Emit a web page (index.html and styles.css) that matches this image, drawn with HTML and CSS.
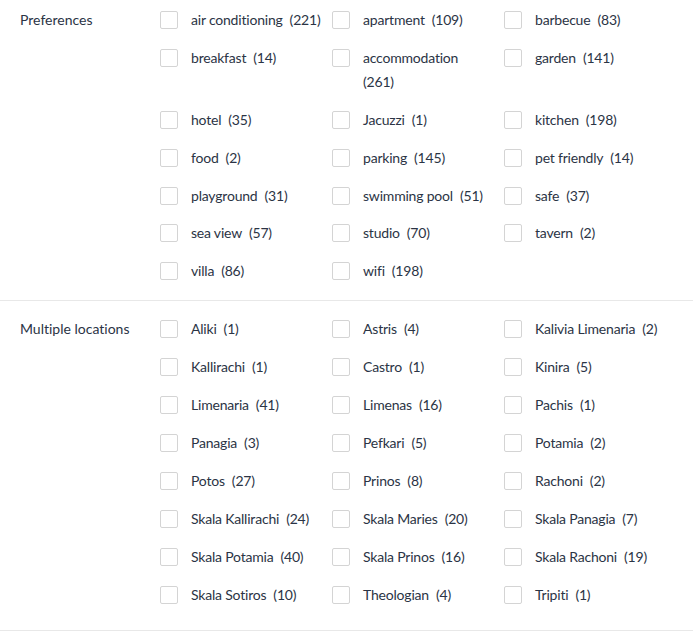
FILE: index.html
```html
<!DOCTYPE html>
<html>
<head>
<meta charset="utf-8">
<link rel="stylesheet" href="styles.css">
</head>
<body>
<section class="group group-first">
  <div class="group-label">Preferences</div>
  <div class="options">
    <label class="opt"><span class="box"></span><span class="txt">air conditioning<span class="cnt">(221)</span></span></label>
    <label class="opt"><span class="box"></span><span class="txt">apartment<span class="cnt">(109)</span></span></label>
    <label class="opt"><span class="box"></span><span class="txt">barbecue<span class="cnt">(83)</span></span></label>
    <label class="opt"><span class="box"></span><span class="txt">breakfast<span class="cnt">(14)</span></span></label>
    <label class="opt"><span class="box"></span><span class="txt">accommodation<br><span class="cnt cnt-wrap">(261)</span></span></label>
    <label class="opt"><span class="box"></span><span class="txt">garden<span class="cnt">(141)</span></span></label>
    <label class="opt"><span class="box"></span><span class="txt">hotel<span class="cnt">(35)</span></span></label>
    <label class="opt"><span class="box"></span><span class="txt">Jacuzzi<span class="cnt">(1)</span></span></label>
    <label class="opt"><span class="box"></span><span class="txt">kitchen<span class="cnt">(198)</span></span></label>
    <label class="opt"><span class="box"></span><span class="txt">food<span class="cnt">(2)</span></span></label>
    <label class="opt"><span class="box"></span><span class="txt">parking<span class="cnt">(145)</span></span></label>
    <label class="opt"><span class="box"></span><span class="txt">pet friendly<span class="cnt">(14)</span></span></label>
    <label class="opt"><span class="box"></span><span class="txt">playground<span class="cnt">(31)</span></span></label>
    <label class="opt"><span class="box"></span><span class="txt">swimming pool<span class="cnt">(51)</span></span></label>
    <label class="opt"><span class="box"></span><span class="txt">safe<span class="cnt">(37)</span></span></label>
    <label class="opt"><span class="box"></span><span class="txt">sea view<span class="cnt">(57)</span></span></label>
    <label class="opt"><span class="box"></span><span class="txt">studio<span class="cnt">(70)</span></span></label>
    <label class="opt"><span class="box"></span><span class="txt">tavern<span class="cnt">(2)</span></span></label>
    <label class="opt"><span class="box"></span><span class="txt">villa<span class="cnt">(86)</span></span></label>
    <label class="opt"><span class="box"></span><span class="txt">wifi<span class="cnt">(198)</span></span></label>
  </div>
</section>
<section class="group group-last">
  <div class="group-label">Multiple locations</div>
  <div class="options">
    <label class="opt"><span class="box"></span><span class="txt">Aliki<span class="cnt">(1)</span></span></label>
    <label class="opt"><span class="box"></span><span class="txt">Astris<span class="cnt">(4)</span></span></label>
    <label class="opt"><span class="box"></span><span class="txt">Kalivia Limenaria<span class="cnt">(2)</span></span></label>
    <label class="opt"><span class="box"></span><span class="txt">Kallirachi<span class="cnt">(1)</span></span></label>
    <label class="opt"><span class="box"></span><span class="txt">Castro<span class="cnt">(1)</span></span></label>
    <label class="opt"><span class="box"></span><span class="txt">Kinira<span class="cnt">(5)</span></span></label>
    <label class="opt"><span class="box"></span><span class="txt">Limenaria<span class="cnt">(41)</span></span></label>
    <label class="opt"><span class="box"></span><span class="txt">Limenas<span class="cnt">(16)</span></span></label>
    <label class="opt"><span class="box"></span><span class="txt">Pachis<span class="cnt">(1)</span></span></label>
    <label class="opt"><span class="box"></span><span class="txt">Panagia<span class="cnt">(3)</span></span></label>
    <label class="opt"><span class="box"></span><span class="txt">Pefkari<span class="cnt">(5)</span></span></label>
    <label class="opt"><span class="box"></span><span class="txt">Potamia<span class="cnt">(2)</span></span></label>
    <label class="opt"><span class="box"></span><span class="txt">Potos<span class="cnt">(27)</span></span></label>
    <label class="opt"><span class="box"></span><span class="txt">Prinos<span class="cnt">(8)</span></span></label>
    <label class="opt"><span class="box"></span><span class="txt">Rachoni<span class="cnt">(2)</span></span></label>
    <label class="opt"><span class="box"></span><span class="txt">Skala Kallirachi<span class="cnt">(24)</span></span></label>
    <label class="opt"><span class="box"></span><span class="txt">Skala Maries<span class="cnt">(20)</span></span></label>
    <label class="opt"><span class="box"></span><span class="txt">Skala Panagia<span class="cnt">(7)</span></span></label>
    <label class="opt"><span class="box"></span><span class="txt">Skala Potamia<span class="cnt">(40)</span></span></label>
    <label class="opt"><span class="box"></span><span class="txt">Skala Prinos<span class="cnt">(16)</span></span></label>
    <label class="opt"><span class="box"></span><span class="txt">Skala Rachoni<span class="cnt">(19)</span></span></label>
    <label class="opt"><span class="box"></span><span class="txt">Skala Sotiros<span class="cnt">(10)</span></span></label>
    <label class="opt"><span class="box"></span><span class="txt">Theologian<span class="cnt">(4)</span></span></label>
    <label class="opt"><span class="box"></span><span class="txt">Tripiti<span class="cnt">(1)</span></span></label>
  </div>
</section>
</body>
</html>
```
FILE: styles.css
```css
html, body {
  margin: 0;
  padding: 0;
  background: #ffffff;
}
body {
  font-family: Lato, "Liberation Sans", sans-serif;
  font-size: 14px;
  line-height: 24px;
  color: #2b3445;
  font-variant-ligatures: none;
}
.group {
  display: flex;
  align-items: flex-start;
  border-bottom: 1px solid #e8e8e8;
}
.group-first {
  padding: 8px 0 17px 0;
}
.group-last {
  padding: 16px 0 23px 0;
}
.group-label {
  width: 160px;
  padding-left: 20px;
  box-sizing: border-box;
  flex: none;
}
.options {
  display: grid;
  grid-template-columns: repeat(3, 172px);
  row-gap: 13.9px;
}
.opt {
  display: flex;
  align-items: flex-start;
}
.box {
  flex: none;
  width: 16px;
  height: 16px;
  margin-top: 3px;
  border: 1px solid #d4d4d4;
  border-radius: 2px;
  background: #fff;
}
.txt {
  margin-left: 13px;
  letter-spacing: -0.2px;
}
.cnt {
  margin-left: 7px;
}
.cnt-wrap {
  margin-left: 0;
}
```
